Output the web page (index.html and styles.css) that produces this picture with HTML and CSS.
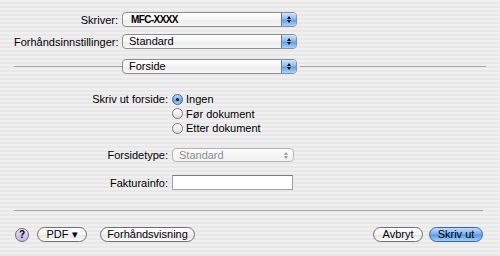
FILE: index.html
```html
<!DOCTYPE html>
<html lang="no">
<head>
    <meta charset="UTF-8">
    <title>Skriv ut</title>
    <link rel="stylesheet" href="styles.css">
</head>
<body>
    <div class="dialog">
        <div class="field">
            <span class="label">Skriver:</span>
            <div class="popup">
                <span class="popup-text printer">MFC-XXXX</span>
                <span class="arrows"><i class="up"></i><i class="down"></i></span>
            </div>
        </div>
        <div class="field">
            <span class="label">Forhåndsinnstillinger:</span>
            <div class="popup">
                <span class="popup-text">Standard</span>
                <span class="arrows"><i class="up"></i><i class="down"></i></span>
            </div>
        </div>
        <div class="section">
            <span class="line first"></span>
            <div class="popup">
                <span class="popup-text">Forside</span>
                <span class="arrows"><i class="up"></i><i class="down"></i></span>
            </div>
            <span class="line"></span>
        </div>

        <div class="panel">
            <div class="prow">
                <span class="plabel">Skriv ut forside:</span>
                <div class="radios">
                    <div class="radio"><span class="dot on"></span>Ingen</div>
                    <div class="radio"><span class="dot"></span>Før dokument</div>
                    <div class="radio"><span class="dot"></span>Etter dokument</div>
                </div>
            </div>
            <div class="prow type-row">
                <span class="plabel">Forsidetype:</span>
                <div class="popup small disabled">
                    <span class="popup-text">Standard</span>
                    <span class="arrows"><i class="up"></i><i class="down"></i></span>
                </div>
            </div>
            <div class="prow info-row">
                <span class="plabel">Fakturainfo:</span>
                <input class="text-input" type="text">
            </div>
        </div>

        <div class="bottom-line"></div>

        <div class="buttons">
            <span class="help">?</span>
            <button class="btn pdf">PDF &#9662;</button>
            <button class="btn preview">Forhåndsvisning</button>
            <span class="spacer"></span>
            <button class="btn cancel">Avbryt</button>
            <button class="btn print">Skriv ut</button>
        </div>
    </div>
</body>
</html>
```

FILE: styles.css
```css
body {
    margin: 0;
    width: 500px;
    height: 256px;
    overflow: hidden;
    font-family: "Liberation Sans", Arial, sans-serif;
    font-size: 11px;
    color: #000;
    background: repeating-linear-gradient(to bottom, #efefef 0 2px, #e8e8e8 2px 4px);
}
.dialog {
    padding: 12px 14px 0 14px;
}
.field {
    display: flex;
    align-items: center;
    height: 15px;
    margin-bottom: 7px;
}
.label {
    width: 104px;
    margin-right: 4px;
    text-align: right;
}
.popup {
    width: 175px;
    height: 15px;
    box-sizing: border-box;
    display: flex;
    border: 1px solid #8d8d8d;
    border-radius: 4px;
    background: linear-gradient(#ffffff, #f6f6f6 50%, #ebebeb 51%, #f7f7f7);
    overflow: hidden;
}
.popup-text {
    flex: 1;
    padding-left: 6px;
    line-height: 13px;
}
.printer {
    padding-left: 8px;
    font-weight: bold;
    font-size: 10px;
    letter-spacing: -0.6px;
}
.arrows {
    width: 14px;
    border-left: 1px solid #5d7fae;
    background: linear-gradient(#cfe5fb, #8dbcf0 45%, #639fe6 55%, #a9d4fb);
    display: flex;
    flex-direction: column;
    align-items: center;
    justify-content: center;
    gap: 1px;
}
.arrows i {
    width: 0;
    height: 0;
    border-left: 2.5px solid transparent;
    border-right: 2.5px solid transparent;
}
.arrows .up {
    border-bottom: 3px solid #111;
}
.arrows .down {
    border-top: 3px solid #111;
}
.section {
    display: flex;
    align-items: center;
    margin-top: 10px;
}
.line {
    flex: 1;
    margin-left: 3px;
    border-top: 1px solid #a6a6a6;
}
.line.first {
    flex: none;
    width: 108px;
    margin-left: 0;
}
.panel {
    margin-top: 18px;
}
.prow {
    display: flex;
    align-items: center;
}
.plabel {
    width: 154px;
    margin-right: 4px;
    text-align: right;
}
.prow:first-child {
    align-items: flex-start;
}
.prow:first-child .plabel {
    line-height: 14.5px;
}
.radio {
    display: flex;
    align-items: center;
    height: 14.5px;
}
.dot {
    width: 11px;
    height: 11px;
    box-sizing: border-box;
    border: 1px solid #7a7a7a;
    border-radius: 50%;
    margin-right: 3px;
    background: linear-gradient(#ffffff, #f0f0f0 50%, #dcdcdc);
    display: flex;
    align-items: center;
    justify-content: center;
}
.dot.on {
    border-color: #3d6598;
    background: linear-gradient(#c4defa, #76aeec 50%, #5b9be4 55%, #a6d0fa);
}
.dot.on::after {
    content: "";
    width: 3px;
    height: 3px;
    border-radius: 50%;
    background: #111;
}
.type-row {
    margin-top: 12.5px;
}
.popup.small {
    width: 122px;
    height: 14px;
}
.popup.disabled {
    border-color: #b7b7b7;
    color: #8e8e8e;
    background: linear-gradient(#fbfbfb, #f2f2f2);
}
.popup.disabled .popup-text {
    line-height: 12px;
}
.popup.disabled .arrows {
    border-left: none;
    background: none;
}
.popup.disabled .up {
    border-bottom-color: #9a9a9a;
}
.popup.disabled .down {
    border-top-color: #9a9a9a;
}
.info-row {
    margin-top: 13px;
}
.text-input {
    width: 121px;
    height: 15px;
    box-sizing: border-box;
    margin: 0;
    padding: 0;
    border: 1px solid #a2a2a2;
    border-top-color: #7c7c7c;
    background: #fff;
}
.bottom-line {
    margin-top: 20px;
    margin-right: 3px;
    border-top: 1px solid #a6a6a6;
}
.buttons {
    display: flex;
    align-items: center;
    margin-top: 16px;
}
.help {
    width: 14px;
    height: 14px;
    box-sizing: border-box;
    margin-left: 1px;
    border: 1px solid #6c6c6c;
    border-radius: 50%;
    background: linear-gradient(#eee6fb, #d3c4ef 55%, #c8b6ea);
    font-weight: bold;
    font-size: 10px;
    line-height: 12px;
    text-align: center;
}
.btn {
    height: 15px;
    box-sizing: border-box;
    padding: 0;
    border: 1px solid #707070;
    border-radius: 8px;
    background: linear-gradient(#ffffff, #f4f4f4 50%, #e4e4e4 51%, #fbfbfb);
    font-family: inherit;
    font-size: 11px;
    line-height: 13px;
    color: #000;
}
.pdf {
    width: 50px;
    margin-left: 8px;
}
.preview {
    width: 95px;
    margin-left: 13px;
}
.spacer {
    flex: 1;
}
.cancel {
    width: 50px;
}
.print {
    width: 54px;
    margin-left: 6px;
    margin-right: 3px;
    border-color: #3c679e;
    background: linear-gradient(#c0dcfa, #78afec 48%, #5596e4 52%, #a3d0fb);
}
```
